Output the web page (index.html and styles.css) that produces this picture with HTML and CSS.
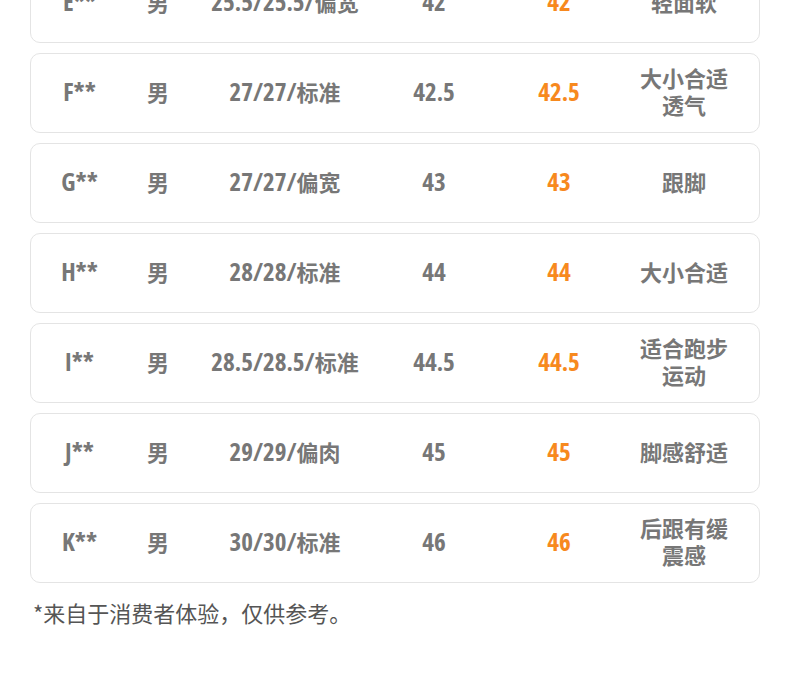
FILE: index.html
```html
<!DOCTYPE html>
<html lang="zh">
<head>
<meta charset="utf-8">
<link rel="stylesheet" href="styles.css">
</head>
<body>
<div class="page">
  <div class="list">
    <div class="card">
      <div class="cell"><span class="num">E**</span></div>
      <div class="cell">男</div>
      <div class="cell"><span class="num">25.5/25.5/</span>偏宽</div>
      <div class="cell"><span class="num">42</span></div>
      <div class="cell hi"><span class="num">42</span></div>
      <div class="cell note">轻面软</div>
    </div>
    <div class="card">
      <div class="cell"><span class="num">F**</span></div>
      <div class="cell">男</div>
      <div class="cell"><span class="num">27/27/</span>标准</div>
      <div class="cell"><span class="num">42.5</span></div>
      <div class="cell hi"><span class="num">42.5</span></div>
      <div class="cell note">大小合适透气</div>
    </div>
    <div class="card">
      <div class="cell"><span class="num">G**</span></div>
      <div class="cell">男</div>
      <div class="cell"><span class="num">27/27/</span>偏宽</div>
      <div class="cell"><span class="num">43</span></div>
      <div class="cell hi"><span class="num">43</span></div>
      <div class="cell note">跟脚</div>
    </div>
    <div class="card">
      <div class="cell"><span class="num">H**</span></div>
      <div class="cell">男</div>
      <div class="cell"><span class="num">28/28/</span>标准</div>
      <div class="cell"><span class="num">44</span></div>
      <div class="cell hi"><span class="num">44</span></div>
      <div class="cell note">大小合适</div>
    </div>
    <div class="card">
      <div class="cell"><span class="num">I**</span></div>
      <div class="cell">男</div>
      <div class="cell"><span class="num">28.5/28.5/</span>标准</div>
      <div class="cell"><span class="num">44.5</span></div>
      <div class="cell hi"><span class="num">44.5</span></div>
      <div class="cell note">适合跑步运动</div>
    </div>
    <div class="card">
      <div class="cell"><span class="num">J**</span></div>
      <div class="cell">男</div>
      <div class="cell"><span class="num">29/29/</span>偏肉</div>
      <div class="cell"><span class="num">45</span></div>
      <div class="cell hi"><span class="num">45</span></div>
      <div class="cell note">脚感舒适</div>
    </div>
    <div class="card">
      <div class="cell"><span class="num">K**</span></div>
      <div class="cell">男</div>
      <div class="cell"><span class="num">30/30/</span>标准</div>
      <div class="cell"><span class="num">46</span></div>
      <div class="cell hi"><span class="num">46</span></div>
      <div class="cell note">后跟有缓震感</div>
    </div>
  </div>
  <p class="footnote">*来自于消费者体验，仅供参考。</p>
</div>
</body>
</html>
```

FILE: styles.css
```css
html, body {
  margin: 0;
  padding: 0;
  background: #ffffff;
}

.page {
  padding: 0 30px;
  font-family: "Noto Sans CJK SC", sans-serif;
}

.list {
  display: flex;
  flex-direction: column;
  gap: 10px;
  margin-top: -37px;
}

.card {
  height: 80px;
  box-sizing: border-box;
  padding-bottom: 4px;
  border: 1px solid #e4e4e4;
  border-radius: 10px;
  display: grid;
  grid-template-columns: 97px 60px 194px 104px 146px 104px;
  align-items: center;
  color: #777777;
  font-size: 22px;
  font-weight: 700;
}

.cell {
  text-align: center;
  line-height: 27px;
  white-space: nowrap;
}

.cell.note {
  white-space: normal;
  padding: 0 8px;
}

.num {
  font-family: "Open Sans", "DejaVu Sans Condensed", sans-serif;
  font-stretch: 75%;
  font-size: 25px;
  font-weight: 660;
}

.hi {
  color: #f7891e;
}

.footnote {
  margin: 13px 0 0 3px;
  font-size: 22px;
  line-height: 32px;
  color: #555555;
  font-weight: 400;
}
```
